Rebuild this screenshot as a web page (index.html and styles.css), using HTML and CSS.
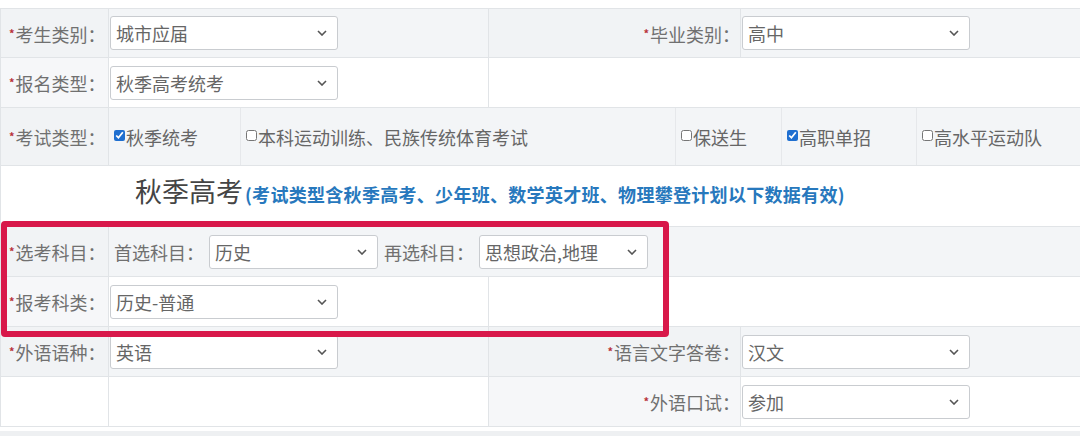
FILE: index.html
```html
<!DOCTYPE HTML>
<html>
<head>
<meta http-equiv="Content-Type" content="text/html; charset=utf-8">
<title>报名信息</title>
<link rel="stylesheet" href="styles.css">
</head>

<body>
<div class="page">
	<table class="form">
		<colgroup>
			<col class="c1">
			<col class="c2">
			<col class="c3">
			<col class="c4">
		</colgroup>
		<tr class="gray">
			<td class="label"><i>*</i>考生类别：</td>
			<td class="value">
				<div class="select wide"><span>城市应届</span><svg width="10" height="6" viewBox="0 0 10 6"><path d="M1 1l4 4 4-4" /></svg></div>
			</td>
			<td class="label right"><i>*</i>毕业类别：</td>
			<td class="value">
				<div class="select wide"><span>高中</span><svg width="10" height="6" viewBox="0 0 10 6"><path d="M1 1l4 4 4-4" /></svg></div>
			</td>
		</tr>
		<tr>
			<td class="label"><i>*</i>报名类型：</td>
			<td class="value">
				<div class="select wide"><span>秋季高考统考</span><svg width="10" height="6" viewBox="0 0 10 6"><path d="M1 1l4 4 4-4" /></svg></div>
			</td>
			<td colspan="2"></td>
		</tr>
		<tr class="gray tall">
			<td class="label"><i>*</i>考试类型：</td>
			<td colspan="3" class="flat">
				<div class="checks">
					<label class="k1"><input type="checkbox" checked>秋季统考</label>
					<label class="k2"><input type="checkbox">本科运动训练、民族传统体育考试</label>
					<label class="k3"><input type="checkbox">保送生</label>
					<label class="k4"><input type="checkbox" checked>高职单招</label>
					<label class="k5"><input type="checkbox">高水平运动队</label>
				</div>
			</td>
		</tr>
		<tr class="head">
			<td colspan="4">
				<span class="title">秋季高考</span><span class="note">(考试类型含秋季高考、少年班、数学英才班、物理攀登计划以下数据有效)</span>
			</td>
		</tr>
		<tr class="gray">
			<td class="label"><i>*</i>选考科目：</td>
			<td colspan="3">
				<div class="subjects">
					<span class="sub">首选科目：</span>
					<div class="select mid"><span>历史</span><svg width="10" height="6" viewBox="0 0 10 6"><path d="M1 1l4 4 4-4" /></svg></div>
					<span class="sub">再选科目：</span>
					<div class="select mid"><span>思想政治,地理</span><svg width="10" height="6" viewBox="0 0 10 6"><path d="M1 1l4 4 4-4" /></svg></div>
				</div>
			</td>
		</tr>
		<tr>
			<td class="label"><i>*</i>报考科类：</td>
			<td class="value">
				<div class="select wide"><span>历史-普通</span><svg width="10" height="6" viewBox="0 0 10 6"><path d="M1 1l4 4 4-4" /></svg></div>
			</td>
			<td colspan="2"></td>
		</tr>
		<tr class="gray">
			<td class="label"><i>*</i>外语语种：</td>
			<td class="value">
				<div class="select wide"><span>英语</span><svg width="10" height="6" viewBox="0 0 10 6"><path d="M1 1l4 4 4-4" /></svg></div>
			</td>
			<td class="label right"><i>*</i>语言文字答卷：</td>
			<td class="value">
				<div class="select wide"><span>汉文</span><svg width="10" height="6" viewBox="0 0 10 6"><path d="M1 1l4 4 4-4" /></svg></div>
			</td>
		</tr>
		<tr>
			<td></td>
			<td></td>
			<td class="label right"><i>*</i>外语口试：</td>
			<td class="value">
				<div class="select wide"><span>参加</span><svg width="10" height="6" viewBox="0 0 10 6"><path d="M1 1l4 4 4-4" /></svg></div>
			</td>
		</tr>
	</table>
	<!-- 标注框 -->
	<div class="mark"></div>
</div>
</body>
</html>
```

FILE: styles.css
```css
*{
	margin: 0;
	padding: 0;
	box-sizing: border-box;
}

body{
	font-family: "Noto Sans CJK SC", "Liberation Sans", sans-serif;
	font-size: 18px;
	color: #707070;
	background-color: #eef0f2;
	width: 1080px;
	height: 436px;
	overflow: hidden;
}

.page{
	position: relative;
	padding-top: 8px;
	background-color: #fff;
	height: 431px;
}

table.form{
	width: 1080px;
	table-layout: fixed;
	border-collapse: collapse;
}
col.c1{ width: 108px; }
col.c2{ width: 380px; }
col.c3{ width: 252px; }
col.c4{ width: 340px; }

table.form td{
	border: 1px solid #e1e4e7;
	height: 50px;
	line-height: 20px;
	vertical-align: middle;
	white-space: nowrap;
	background-color: #fff;
}
table.form tr.gray td{
	background-color: #f3f5f7;
}
table.form tr:first-child td{
	height: 49px;
}
table.form tr.tall td{
	height: 58px;
}

td.label{
	padding-left: 8px;
	color: #707070;
	background-color: #f6f7f9 !important;
}
tr.gray td.label{
	background-color: #f1f3f5 !important;
}
td.label.right{
	text-align: right;
	padding-right: 0;
	padding-left: 0;
}
td.label i{
	font-style: normal;
	font-weight: bold;
	color: #b8323a;
	font-size: 11px;
	vertical-align: 4px;
	margin-right: 1px;
}
td.value{
	padding-left: 1px;
}

.select{
	display: flex;
	align-items: center;
	justify-content: space-between;
	height: 34px;
	border: 1px solid #c9ccd0;
	border-radius: 3px;
	background-color: #fff;
	padding: 0 10px 0 5px;
	color: #666;
	font-size: 18px;
}
.select svg path{
	fill: none;
	stroke: #555;
	stroke-width: 1.6;
}
.select.wide{
	width: 228px;
}
.select.mid{
	width: 169px;
}

td.flat{
	padding: 0;
}
.checks{
	display: flex;
	height: 57px;
}
.checks label{
	display: flex;
	align-items: center;
	padding-left: 5px;
	border-right: 1px solid #e6e8eb;
	color: #666;
}
.checks label:last-child{
	border-right: none;
}
.checks input{
	width: 11px;
	height: 11px;
	margin: 0 1px 2px 0;
	accent-color: #1f6fd0;
}
.k1{ width: 132px; }
.k2{ width: 435px; padding-left: 4px; }
.k3{ width: 106px; }
.k4{ width: 135px; }
.k5{ flex: 1; }

tr.head td{
	height: 61px !important;
	padding-left: 134px;
	padding-bottom: 10px;
}
.title{
	font-size: 27px;
	color: #444;
	line-height: 30px;
}
.note{
	font-size: 18px;
	letter-spacing: 0.3px;
	font-weight: bold;
	color: #2778bd;
	margin-left: 2px;
}

.subjects{
	display: flex;
	align-items: center;
	padding-left: 5px;
}
.sub{
	color: #707070;
	margin-right: 5px;
}
.subjects .select{
	margin-right: 6px;
}

.mark{
	position: absolute;
	left: 1px;
	top: 221px;
	width: 668px;
	height: 116px;
	border: 6px solid #d8184a;
	border-radius: 4px;
}
```
